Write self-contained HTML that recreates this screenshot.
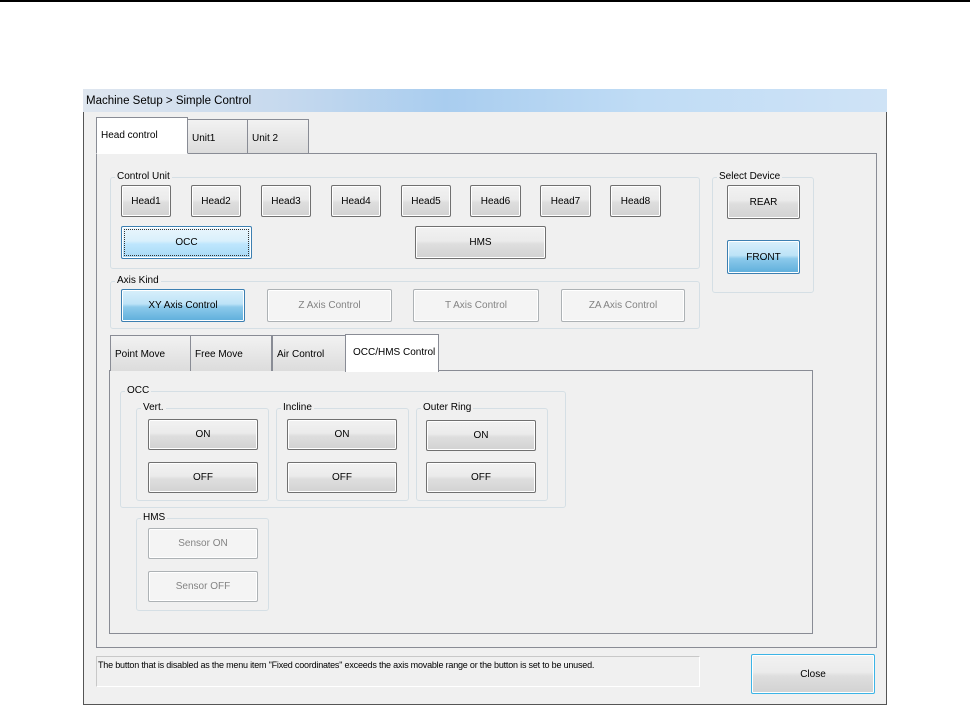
<!DOCTYPE html>
<html><head><meta charset="utf-8"><style>
*{box-sizing:border-box;margin:0;padding:0}
body{width:970px;height:705px;background:#fff;position:relative;overflow:hidden;font-family:"Liberation Sans",sans-serif;font-size:10px;color:#000}
.a{position:absolute}
.topline{left:0;top:0;width:970px;height:2px;background:#000}
.win{left:83px;top:89px;width:804px;height:616px;background:#f0f0f0;border:1px solid #555;border-top:none}
.title{left:83px;top:89px;width:804px;height:23px;background:linear-gradient(90deg,#dfe6ef 0%,#c6d9ee 25%,#a9cdef 45%,#c0dcf5 70%,#cfe3f6 100%);font-size:11.5px;padding:6px 0 0 3px}
.btn{position:absolute;border:1px solid #707070;border-radius:2px;background:linear-gradient(#f2f2f2 0%,#ebebeb 45%,#dedede 55%,#d2d2d2 100%);display:flex;align-items:center;justify-content:center;font-size:10px;box-shadow:0 0 0 1px #fff inset}
.blue{border-color:#3c7fb1;background:linear-gradient(#eaf6fd 0%,#d9f0fc 45%,#bee6fd 55%,#a7d9f5 100%)}
.dblue{border-color:#3c7fb1;background:linear-gradient(#d8effb 0%,#bde3f7 45%,#8ccaeb 55%,#5eaedb 100%)}
.dis{border-color:#adb2b5;background:#f4f4f4;color:#838383}
.grp{position:absolute;border:1px solid #d5dfe5;border-radius:3px}
.gl{position:absolute;background:#f0f0f0;padding:0 2px;font-size:10px;top:-7px;left:4px;line-height:12px}
.tab{position:absolute;border:1px solid #898c95;border-bottom:none;background:linear-gradient(#f2f2f2,#dcdcdc);font-size:10px;padding:13px 0 0 4px}
.tab.on{background:#fff}
.panel{position:absolute;border:1px solid #898c95;background:#f0f0f0}
</style></head><body>
<div class="a topline"></div>
<div class="a win"></div>
<div class="a title">Machine Setup &gt; Simple Control</div>

<div class="panel" style="left:96px;top:153px;width:781px;height:495px"></div>
<div class="tab on" style="left:96px;top:117px;width:92px;height:37px;padding-top:12px;border-bottom:1px solid #fff">Head control</div>
<div class="tab" style="left:187px;top:119px;width:61px;height:34px">Unit1</div>
<div class="tab" style="left:247px;top:119px;width:62px;height:34px">Unit 2</div>

<div class="grp" style="left:110px;top:177px;width:590px;height:92px"><span class="gl">Control Unit</span></div>
<div class="btn" style="left:121px;top:185px;width:50px;height:32px">Head1</div>
<div class="btn" style="left:191px;top:185px;width:50px;height:32px">Head2</div>
<div class="btn" style="left:261px;top:185px;width:50px;height:32px">Head3</div>
<div class="btn" style="left:331px;top:185px;width:50px;height:32px">Head4</div>
<div class="btn" style="left:401px;top:185px;width:50px;height:32px">Head5</div>
<div class="btn" style="left:470px;top:185px;width:51px;height:32px">Head6</div>
<div class="btn" style="left:540px;top:185px;width:51px;height:32px">Head7</div>
<div class="btn" style="left:610px;top:185px;width:51px;height:32px">Head8</div>
<div class="btn blue" style="left:121px;top:226px;width:131px;height:33px;outline:1px dotted #333;outline-offset:-4px">OCC</div>
<div class="btn" style="left:415px;top:226px;width:131px;height:33px">HMS</div>

<div class="grp" style="left:712px;top:177px;width:102px;height:116px"><span class="gl" style="left:4px">Select Device</span></div>
<div class="btn" style="left:727px;top:185px;width:73px;height:34px">REAR</div>
<div class="btn dblue" style="left:727px;top:240px;width:73px;height:34px">FRONT</div>

<div class="grp" style="left:110px;top:281px;width:590px;height:48px"><span class="gl">Axis Kind</span></div>
<div class="btn dblue" style="left:121px;top:289px;width:124px;height:33px">XY Axis Control</div>
<div class="btn dis" style="left:267px;top:289px;width:125px;height:33px">Z Axis Control</div>
<div class="btn dis" style="left:413px;top:289px;width:126px;height:33px">T Axis Control</div>
<div class="btn dis" style="left:561px;top:289px;width:124px;height:33px">ZA Axis Control</div>

<div class="panel" style="left:109px;top:370px;width:704px;height:264px"></div>
<div class="tab" style="left:110px;top:335px;width:81px;height:36px">Point Move</div>
<div class="tab" style="left:190px;top:335px;width:82px;height:36px">Free Move</div>
<div class="tab" style="left:272px;top:335px;width:74px;height:36px">Air Control</div>
<div class="tab on" style="left:345px;top:334px;width:94px;height:38px;padding:12px 0 0 7px;border-bottom:none">OCC/HMS Control</div>

<div class="grp" style="left:120px;top:391px;width:446px;height:117px"><span class="gl">OCC</span></div>
<div class="grp" style="left:136px;top:408px;width:133px;height:93px"><span class="gl">Vert.</span></div>
<div class="grp" style="left:276px;top:408px;width:133px;height:93px"><span class="gl">Incline</span></div>
<div class="grp" style="left:416px;top:408px;width:132px;height:93px"><span class="gl">Outer Ring</span></div>
<div class="btn" style="left:148px;top:419px;width:110px;height:31px">ON</div>
<div class="btn" style="left:148px;top:462px;width:110px;height:31px">OFF</div>
<div class="btn" style="left:287px;top:419px;width:110px;height:31px">ON</div>
<div class="btn" style="left:287px;top:462px;width:110px;height:31px">OFF</div>
<div class="btn" style="left:426px;top:420px;width:110px;height:31px">ON</div>
<div class="btn" style="left:426px;top:462px;width:110px;height:31px">OFF</div>

<div class="grp" style="left:136px;top:518px;width:133px;height:93px"><span class="gl">HMS</span></div>
<div class="btn dis" style="left:148px;top:528px;width:110px;height:31px">Sensor ON</div>
<div class="btn dis" style="left:148px;top:571px;width:110px;height:31px">Sensor OFF</div>

<div class="a" style="left:96px;top:656px;width:604px;height:31px;border:1px solid #c8c8c8;border-right-color:#fff;border-bottom-color:#fff;font-size:9px;padding:3px 0 0 1px;letter-spacing:-0.2px">The button that is disabled as the menu item "Fixed coordinates" exceeds the axis movable range or the button is set to be unused.</div>
<div class="btn" style="left:751px;top:654px;width:124px;height:40px;border-color:#3cb4e6">Close</div>
</body></html>
